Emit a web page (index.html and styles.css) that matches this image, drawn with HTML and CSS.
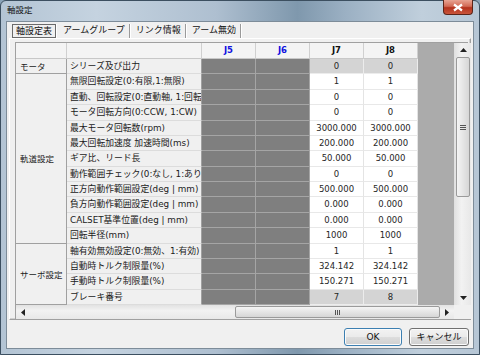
FILE: index.html
```html
<!DOCTYPE html>
<html lang="ja">
<head>
<meta charset="utf-8">
<link rel="stylesheet" href="styles.css">
</head>
<body>
<div class="window">
  <div class="titlebar">
    <span class="title">軸設定</span>
    <div class="close">
      <svg width="12" height="9" viewBox="0 0 12 9"><path d="M2 1.5 L10 7.5 M10 1.5 L2 7.5" stroke="#fff" stroke-width="2.2" fill="none"/></svg>
    </div>
  </div>
  <div class="client">
    <div class="tabs">
      <div class="tab active">軸設定表</div>
      <div class="tab">アームグループ</div>
      <div class="tab">リンク情報</div>
      <div class="tab">アーム無効</div>
    </div>
    <div class="panel">
      <div class="gridwrap">
        <div class="table">
          <div class="filler"></div>
          <div class="grp g1">モータ</div>
          <div class="grp g2">軌道設定</div>
          <div class="grp g3">サーボ設定</div>

          <div class="hd"></div><div class="hd"></div><div class="hd blue">J5</div><div class="hd blue">J6</div><div class="hd">J7</div><div class="hd">J8</div>

          <div class="it">シリーズ及び出力</div><div class="dk"></div><div class="dk"></div><div class="v ro">0</div><div class="v ro">0</div>
          <div class="it">無限回転設定(0:有限,1:無限)</div><div class="dk"></div><div class="dk"></div><div class="v">1</div><div class="v">1</div>
          <div class="it">直動、回転設定(0:直動軸, 1:回転軸)</div><div class="dk"></div><div class="dk"></div><div class="v">0</div><div class="v">0</div>
          <div class="it">モータ回転方向(0:CCW, 1:CW)</div><div class="dk"></div><div class="dk"></div><div class="v">0</div><div class="v">0</div>
          <div class="it">最大モータ回転数(rpm)</div><div class="dk"></div><div class="dk"></div><div class="v">3000.000</div><div class="v">3000.000</div>
          <div class="it">最大回転加速度 加速時間(ms)</div><div class="dk"></div><div class="dk"></div><div class="v">200.000</div><div class="v">200.000</div>
          <div class="it">ギア比、リード長</div><div class="dk"></div><div class="dk"></div><div class="v">50.000</div><div class="v">50.000</div>
          <div class="it">動作範囲チェック(0:なし, 1:あり)</div><div class="dk"></div><div class="dk"></div><div class="v">0</div><div class="v">0</div>
          <div class="it">正方向動作範囲設定(deg | mm)</div><div class="dk"></div><div class="dk"></div><div class="v">500.000</div><div class="v">500.000</div>
          <div class="it">負方向動作範囲設定(deg | mm)</div><div class="dk"></div><div class="dk"></div><div class="v">0.000</div><div class="v">0.000</div>
          <div class="it">CALSET基準位置(deg | mm)</div><div class="dk"></div><div class="dk"></div><div class="v">0.000</div><div class="v">0.000</div>
          <div class="it">回転半径(mm)</div><div class="dk"></div><div class="dk"></div><div class="v">1000</div><div class="v">1000</div>
          <div class="it">軸有効無効設定(0:無効、1:有効)</div><div class="dk"></div><div class="dk"></div><div class="v">1</div><div class="v">1</div>
          <div class="it">自動時トルク制限量(%)</div><div class="dk"></div><div class="dk"></div><div class="v">324.142</div><div class="v">324.142</div>
          <div class="it">手動時トルク制限量(%)</div><div class="dk"></div><div class="dk"></div><div class="v">150.271</div><div class="v">150.271</div>
          <div class="it">ブレーキ番号</div><div class="dk"></div><div class="dk"></div><div class="v ro">7</div><div class="v ro">8</div>
        </div>
        <div class="vscroll">
          <div class="arrow"><svg width="7" height="4" viewBox="0 0 7 4"><path d="M0 4 L3.5 0 L7 4Z" fill="#222"/></svg></div>
          <div class="vtrack">
            <div class="vthumb"><span class="grip-v"></span></div>
          </div>
          <div class="arrow"><svg width="7" height="4" viewBox="0 0 7 4"><path d="M0 0 L3.5 4 L7 0Z" fill="#222"/></svg></div>
        </div>
        <div class="hscroll">
          <div class="arrow"><svg width="4" height="7" viewBox="0 0 4 7"><path d="M4 0 L0 3.5 L4 7Z" fill="#222"/></svg></div>
          <div class="htrack">
            <div class="hthumb"><span class="grip-h"></span></div>
          </div>
          <div class="arrow"><svg width="4" height="7" viewBox="0 0 4 7"><path d="M0 0 L4 3.5 L0 7Z" fill="#222"/></svg></div>
        </div>
        <div class="corner"></div>
      </div>
    </div>
    <div class="buttons">
      <button class="btn default">OK</button>
      <button class="btn">キャンセル</button>
    </div>
  </div>
</div>
</body>
</html>
```

FILE: styles.css
```css
* { box-sizing: border-box; }
html, body { margin: 0; padding: 0; }
body {
  width: 480px;
  height: 355px;
  overflow: hidden;
  background: #8aa3b8;
  font-family: "DejaVu Sans", "Noto Sans CJK JP", sans-serif;
  font-size: 8.5px;
  color: #1a1a1a;
}
.window {
  width: 480px;
  height: 355px;
  display: flex;
  flex-direction: column;
  border: 1px solid #3c4f60;
  border-radius: 6px 6px 0 0;
  background: linear-gradient(90deg, #b3c4d4 0%, #c5d3e0 20%, #aebfd0 45%, #7f98ad 62%, #9bb0c3 72%, #c0cfdc 88%, #b6c6d5 100%);
  padding: 0 5px 5px 5px;
}
.titlebar {
  height: 20px;
  display: flex;
  align-items: flex-start;
  justify-content: space-between;
}
.title {
  padding: 3px 0 0 1px;
  font-size: 8.5px;
  color: #111;
  line-height: 13px;
}
.close {
  width: 30px;
  height: 15px;
  margin-right: 1px;
  margin-top: -1px;
  border: 1px solid #5c2418;
  border-top: none;
  border-radius: 0 0 4px 4px;
  background: linear-gradient(#e8a493 0%, #d26a55 45%, #b4321d 55%, #c9553b 100%);
  display: flex;
  align-items: center;
  justify-content: center;
}
.client {
  flex: 1;
  background: #f0f0f0;
  border: 1px solid #7d8c99;
  display: flex;
  flex-direction: column;
  padding: 2px 2px 0 2px;
}
.tabs {
  display: flex;
  height: 14px;
  padding-left: 3px;
  align-items: stretch;
}
.tab {
  font-size: 9px;
  line-height: 12px;
  padding: 0 4px 0 4px;
  border-right: 1px solid #9a9a9a;
  box-shadow: 1px 0 0 #fff;
  margin-right: 2px;
  color: #111;
}
.tab.active {
  border: 1px solid #6a6a6a;
  background: #f0f0f0;
  padding: 0 3px;
  margin-right: 3px;
}
.panel {
  height: 282px;
  border: 1px solid #a0a0a0;
  border-top-color: #fff;
  border-left-color: #fff;
  box-shadow: inset -1px -1px 0 #d0d0d0;
  padding: 3px 2px 2px 5px;
}
.gridwrap {
  display: grid;
  grid-template-columns: 438px 17px;
  grid-template-rows: 262px 14px;
  border-left: 1px solid #a0a0a0;
  border-top: 1px solid #a0a0a0;
}
.table {
  display: grid;
  grid-template-columns: 51px 135px 54px 54px 54px 54px 1fr;
  grid-template-rows: 16px repeat(16, 15.375px);
  background: #ababab;
  overflow: hidden;
}
.table > div {
  overflow: hidden;
  white-space: nowrap;
}
.filler { grid-column: 7; grid-row: 1 / 18; background: #ababab; }
.grp {
  grid-column: 1;
  background: #f0f0f0;
  border-right: 1px solid #a0a0a0;
  border-bottom: 1px solid #a0a0a0;
  display: flex;
  align-items: center;
  padding-left: 4px;
}
.g1 { grid-row: 2; }
.g2 { grid-row: 3 / span 11; }
.g3 { grid-row: 14 / span 4; }
.hd {
  background: #f4f4f4;
  border-right: 1px solid #d0d0d0;
  border-bottom: 1px solid #c8c8c8;
  text-align: center;
  line-height: 15px;
  font-weight: bold;
  color: #111;
}
.hd.blue { color: #1010e0; }
.it {
  background: #f0f0f0;
  border-right: 1px solid #a0a0a0;
  border-bottom: 1px solid #dcdcdc;
  padding-left: 3px;
  line-height: 14px;
  font-size: 8.8px;
}
.dk {
  background: #7f7f7f;
  border-right: 1px solid #a5a5a5;
  border-bottom: 1px solid #a5a5a5;
}
.v {
  background: #fff;
  border-right: 1px solid #e4e4e4;
  border-bottom: 1px solid #e8e8e8;
  text-align: center;
  line-height: 14px;
  color: #262626;
}
.v.ro { background: #d4d4d4; border-color: #ececec; }
.vscroll {
  display: flex;
  flex-direction: column;
  background: linear-gradient(90deg, #e2e2e2, #f2f2f2 40%, #e8e8e8);
  border-left: 1px solid #e0e0e0;
}
.arrow {
  height: 14px;
  flex: none;
  display: flex;
  align-items: center;
  justify-content: center;
}
.vtrack { flex: 1; padding: 0 1px; }
.vthumb {
  height: 140px;
  border: 1px solid #9a9a9a;
  border-radius: 2px;
  background: linear-gradient(90deg, #f4f4f4, #e2e2e2 60%, #d6d6d6);
  display: flex;
  align-items: center;
  justify-content: center;
}
.grip-v {
  width: 6px;
  height: 5px;
  border-top: 1px solid #555;
  border-bottom: 1px solid #555;
}
.grip-v::after {
  content: "";
  display: block;
  margin-top: 1px;
  border-top: 1px solid #555;
}
.hscroll {
  display: flex;
  background: linear-gradient(#e2e2e2, #f2f2f2 40%, #e8e8e8);
}
.hscroll .arrow { width: 14px; height: 14px; }
.htrack { flex: 1; padding: 1px 0; display: flex; justify-content: flex-end; }
.hthumb {
  width: 205px;
  border: 1px solid #9a9a9a;
  border-radius: 2px;
  background: linear-gradient(#f4f4f4, #e2e2e2 60%, #d6d6d6);
  display: flex;
  align-items: center;
  justify-content: center;
}
.grip-h {
  width: 5px;
  height: 5px;
  border-left: 1px solid #555;
  border-right: 1px solid #555;
  display: flex;
  justify-content: center;
}
.grip-h::after {
  content: "";
  border-left: 1px solid #555;
}
.corner { background: #f0f0f0; }
.buttons {
  display: flex;
  justify-content: flex-end;
  gap: 7px;
  padding: 8px 2px 0 0;
}
.btn {
  font-family: "DejaVu Sans", "Noto Sans CJK JP", sans-serif;
  font-size: 9px;
  color: #111;
  height: 18px;
  padding: 0;
  border: 1px solid #707070;
  border-radius: 3px;
  background: linear-gradient(#f2f2f2 0%, #ebebeb 48%, #dddddd 52%, #cfcfcf 100%);
  box-shadow: inset 0 0 0 1px #fbfbfb;
  line-height: 14px;
}
.btn.default { width: 58px; border-color: #3c7fb1; }
.btn:not(.default) { width: 60px; }
```
